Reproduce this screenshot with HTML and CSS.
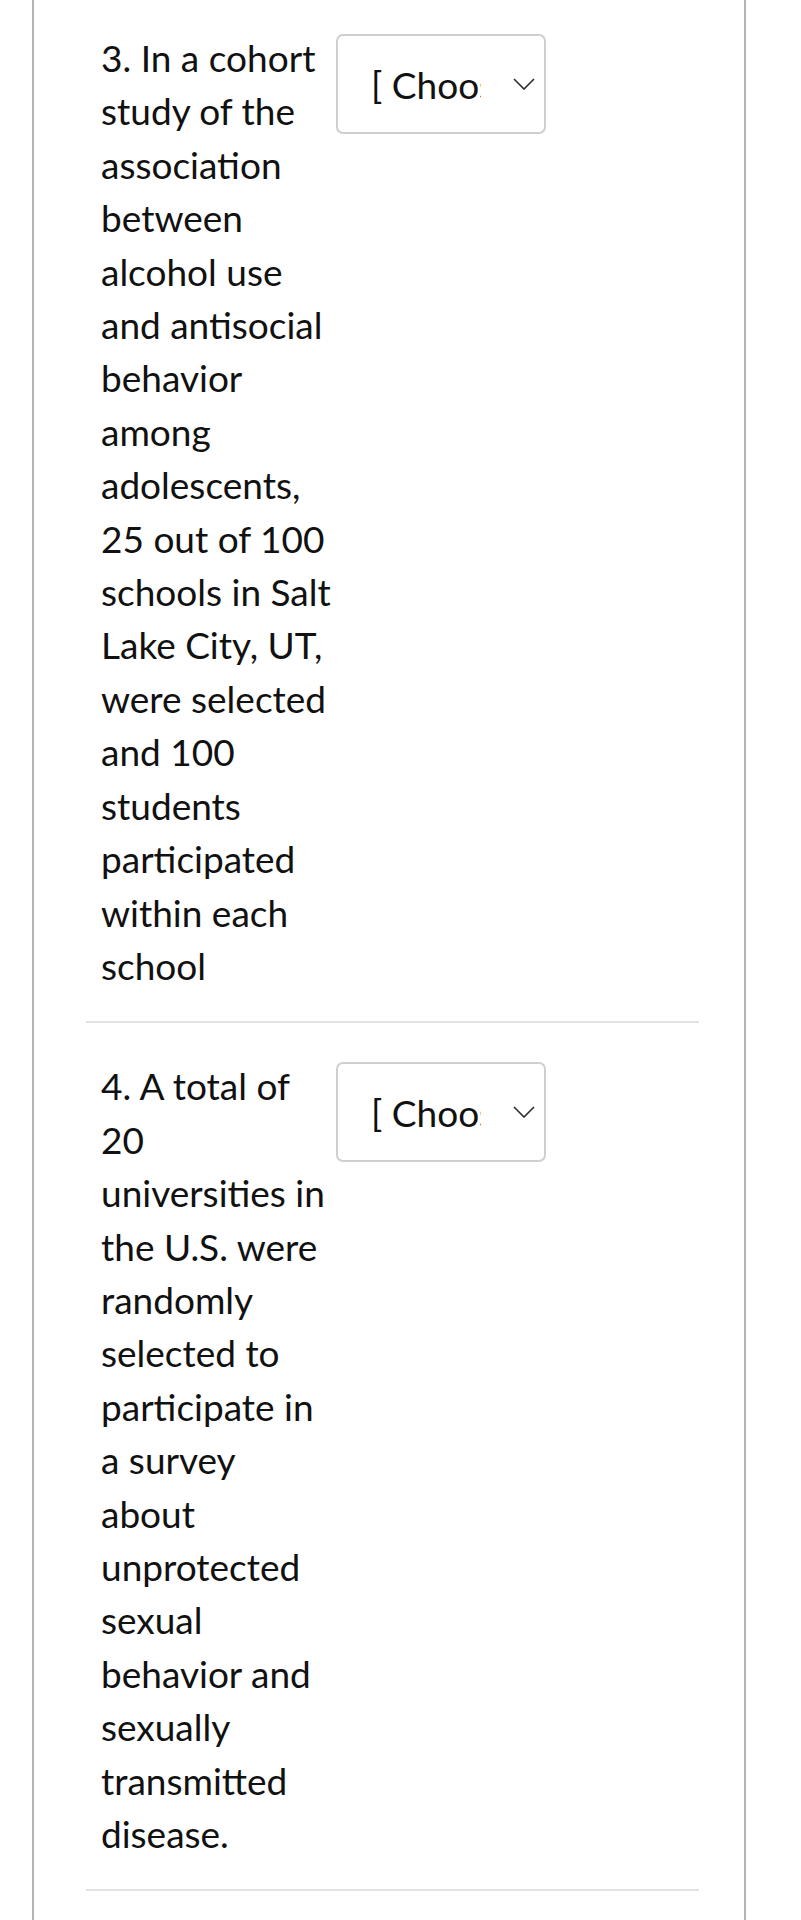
FILE: index.html
```html
<!DOCTYPE html>
<html>
<head>
<meta charset="utf-8">
<link rel="stylesheet" href="styles.css">
</head>
<body>
<div class="question">
  <div class="answers">
    <div class="answer">
      <div class="answer-text">3. In a cohort study of the association between alcohol use and antisocial behavior among adolescents, 25 out of 100 schools in Salt Lake City, UT, were selected and 100 students participated within each school</div>
      <div class="select">
        <span class="select-label">[ Choose ]</span>
        <svg class="chevron" viewBox="0 0 22 12" width="22" height="12"><path d="M1 1 L11 11 L21 1" fill="none" stroke="#2d2d2d" stroke-width="1.6"/></svg>
      </div>
    </div>
    <div class="answer">
      <div class="answer-text">4. A total of 20 universities in the U.S. were randomly selected to participate in a survey about unprotected sexual behavior and sexually transmitted disease.</div>
      <div class="select">
        <span class="select-label">[ Choose ]</span>
        <svg class="chevron" viewBox="0 0 22 12" width="22" height="12"><path d="M1 1 L11 11 L21 1" fill="none" stroke="#2d2d2d" stroke-width="1.6"/></svg>
      </div>
    </div>
  </div>
</div>
</body>
</html>
```
FILE: styles.css
```css
html, body {
  margin: 0;
  padding: 0;
  background: #ffffff;
}
body {
  font-family: Lato, "Open Sans", sans-serif;
  color: #111111;
}
.question {
  margin-left: 32px;
  width: 714px;
  min-height: 1920px;
  border-left: 2px solid #b4b4b4;
  border-right: 2px solid #b4b4b4;
  box-sizing: border-box;
}
.answers {
  margin: 0 45px 0 52px;
}
.answer {
  display: flex;
  align-items: flex-start;
  padding: 36px 0 29px 15px;
  border-bottom: 2px solid #e2e2e2;
}
.answer:first-child {
  padding-top: 31px;
}
.answer-text {
  width: 235px;
  flex: none;
  font-size: 37px;
  line-height: 53.4px;
}
.select {
  margin-top: 3px;
  width: 210px;
  height: 100px;
  box-sizing: border-box;
  border: 2px solid #cfcfcf;
  border-radius: 7px;
  display: flex;
  align-items: center;
  padding-left: 33px;
}
.select-label {
  width: 110px;
  flex: none;
  overflow: hidden;
  white-space: nowrap;
  font-size: 37px;
  color: #111111;
}
.chevron {
  margin-left: 32px;
  flex: none;
}
```
